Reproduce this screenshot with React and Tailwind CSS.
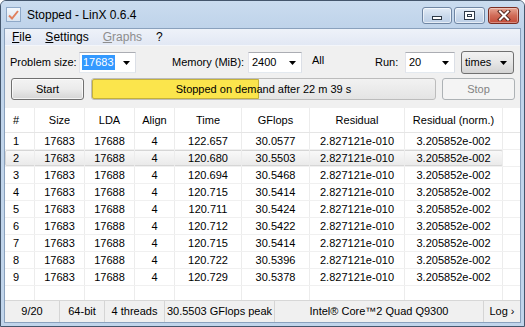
import React from "react";

const colW = ["w-[30px]", "w-[50px]", "w-[50px]", "w-[40px]", "w-[67px]", "w-[68px]", "w-[95px]", "w-[98px]"];
const headers = ["#", "Size", "LDA", "Align", "Time", "GFlops", "Residual", "Residual (norm.)"];

const runs = [
    ["1", "122.657", "30.0577"],
    ["2", "120.680", "30.5503"],
    ["3", "120.694", "30.5468"],
    ["4", "120.715", "30.5414"],
    ["5", "120.711", "30.5424"],
    ["6", "120.712", "30.5422"],
    ["7", "120.715", "30.5414"],
    ["8", "120.722", "30.5396"],
    ["9", "120.729", "30.5378"],
];

function Arrow() {
    return (
        <svg width="7" height="4" viewBox="0 0 7 4" className="shrink-0">
            <path d="M0 0h7L3.5 4z" fill="#000" />
        </svg>
    );
}

function Combo({ value, width, selected }) {
    return (
        <div className={`${width} h-[21px] bg-white border border-[#abadb3] border-b-[#e3e9ef] border-l-[#e2e3ea] border-r-[#dbdfe6] flex items-center pl-[2px] pr-[5px]`}>
            <span className={selected ? "bg-[#3399ff] text-white px-[1px] leading-[15px]" : "px-[1px]"}>{value}</span>
            <div className="flex-1" />
            <Arrow />
        </div>
    );
}

function Cell({ i, children }) {
    return (
        <div className={`${colW[i]} h-full shrink-0 border-r border-[#ececec] flex items-center ${i === 0 ? "justify-start pl-[8px]" : "justify-center"}`}>
            {children}
        </div>
    );
}

export default function App() {
    return (
        <div className="w-[525px] h-[327px] bg-[#c1d5eb] border border-[#44566c] rounded-t-[6px] flex flex-col overflow-hidden text-[11px] text-black font-['Liberation_Sans',Arial,sans-serif]">
            {/* title bar */}
            <div className="h-[27px] shrink-0 flex items-start bg-linear-to-b from-[#cadcef] to-[#bfd3ea]">
                <div className="mt-[6px] ml-[5px] w-[15px] h-[15px] border border-[#8fa9c8] bg-linear-to-b from-[#f4f8fc] to-[#d9e4f0] flex items-center justify-center">
                    <svg width="11" height="10" viewBox="0 0 11 10">
                        <path d="M1 5.5l3 3L10 1" stroke="#e0805e" strokeWidth="2" fill="none" />
                    </svg>
                </div>
                <span className="ml-[6px] mt-[6px] text-[12px] leading-[16px]">Stopped - LinX 0.6.4</span>
                <div className="flex-1" />
                <div className="mt-[6px] flex gap-[2px]">
                    <div className="w-[30px] h-[17px] rounded-[3px] border border-[#6f86a4] bg-linear-to-b from-[#e3ecf7] via-[#cbdaec] to-[#bccfe7] shadow-[inset_0_0_0_1px_rgba(255,255,255,0.6)] flex items-end justify-center pb-[3px]">
                        <div className="w-[10px] h-[4px] bg-white border border-[#2e3a48]" />
                    </div>
                    <div className="w-[31px] h-[17px] rounded-[3px] border border-[#6f86a4] bg-linear-to-b from-[#e3ecf7] via-[#cbdaec] to-[#bccfe7] shadow-[inset_0_0_0_1px_rgba(255,255,255,0.6)] flex items-center justify-center">
                        <div className="w-[11px] h-[9px] bg-white border border-[#2e3a48] flex items-center justify-center">
                            <div className="w-[5px] h-[3px] border border-[#2e3a48]" />
                        </div>
                    </div>
                    <div className="ml-[1px] w-[31px] h-[17px] rounded-[3px] border border-[#7a2d22] bg-linear-to-b from-[#e6a594] via-[#d06c58] to-[#c24a37] shadow-[inset_0_0_0_1px_rgba(255,255,255,0.35)] flex items-center justify-center">
                        <svg width="14" height="11" viewBox="0 0 14 11">
                            <path d="M3 1.5l8 8M11 1.5l-8 8" stroke="#5a2a22" strokeWidth="4" strokeLinecap="square" />
                            <path d="M3 1.5l8 8M11 1.5l-8 8" stroke="#fff" strokeWidth="2" strokeLinecap="square" />
                        </svg>
                    </div>
                </div>
                <div className="w-[5px]" />
            </div>

            {/* client area */}
            <div className="flex-1 mx-[3px] mb-[3px] border border-[#8aa1bd] bg-[#f0f0f0] flex flex-col min-h-0">
                {/* menu */}
                <div className="h-[17px] shrink-0 flex items-center gap-[14px] pl-[7px] bg-linear-to-b from-[#eef2f9] to-[#e2e8f4] border-b border-[#f4f6fa] text-[12px]">
                    <span><u>F</u>ile</span>
                    <span><u>S</u>ettings</span>
                    <span className="text-[#8d8d8d]"><u>G</u>raphs</span>
                    <span>?</span>
                </div>

                {/* parameters row */}
                <div className="mt-[6px] h-[21px] shrink-0 flex items-center pl-[5px]">
                    <span className="w-[69px]">Problem size:</span>
                    <Combo value="17683" width="w-[57px]" selected />
                    <span className="ml-[36px] w-[76px]">Memory (MiB):</span>
                    <Combo value="2400" width="w-[54px]" />
                    <span className="ml-[10px] w-[63px] -mt-[4px]">All</span>
                    <span className="w-[30px]">Run:</span>
                    <Combo value="20" width="w-[50px]" />
                    <div className="ml-[6px] w-[53px] h-[23px] rounded-[3px] border border-[#707070] bg-linear-to-b from-[#f2f2f2] via-[#e6e6e6] to-[#d3d3d3] flex items-center pl-[3px] pr-[6px]">
                        <span>times</span>
                        <div className="flex-1" />
                        <Arrow />
                    </div>
                </div>

                {/* action row */}
                <div className="mt-[5px] h-[22px] shrink-0 flex items-stretch pl-[6px] pr-[5px] gap-[7px]">
                    <div className="w-[73px] rounded-[3px] border border-[#707070] bg-linear-to-b from-[#f3f3f3] via-[#ebebeb] to-[#d5d5d5] shadow-[inset_0_0_0_1px_rgba(255,255,255,0.7)] flex items-center justify-center">
                        Start
                    </div>
                    <div className="relative flex-1 rounded-[3px] border border-[#bcbcbc] bg-linear-to-b from-[#f2f2f2] to-[#e4e4e4] flex">
                        <div className="w-[167px] h-full bg-[#fbe54c] border border-[#c4b13a] rounded-l-[2px]" />
                        <span className="absolute inset-0 flex items-center justify-center">Stopped on demand after 22 m 39 s</span>
                    </div>
                    <div className="ml-[-1px] w-[73px] rounded-[3px] border border-[#adb2b5] bg-[#f4f4f4] text-[#838383] flex items-center justify-center">
                        Stop
                    </div>
                </div>

                {/* results table */}
                <div className="mt-[8px] flex-1 min-h-0 bg-white flex flex-col">
                    <div className="h-[25px] shrink-0 flex border-b border-[#e5e5e5]">
                        {headers.map((h, i) => (
                            <Cell key={h} i={i}>{h}</Cell>
                        ))}
                        <div className="flex-1" />
                    </div>
                    {runs.map(([n, time, gf]) => (
                        <div key={n} className="h-[17px] shrink-0 flex border-b border-[#f0f0f0]">
                            <div className={`flex h-full ${n === "2" ? "bg-linear-to-b from-[#fafafa] to-[#e9e9e9] shadow-[inset_0_0_0_1px_#d6d6d6] rounded-[2px]" : ""}`}>
                                <Cell i={0}>{n}</Cell>
                                <Cell i={1}>17683</Cell>
                                <Cell i={2}>17688</Cell>
                                <Cell i={3}>4</Cell>
                                <Cell i={4}>{time}</Cell>
                                <Cell i={5}>{gf}</Cell>
                                <Cell i={6}>2.827121e-010</Cell>
                                <Cell i={7}>3.205852e-002</Cell>
                            </div>
                            <div className="flex-1" />
                        </div>
                    ))}
                    <div className="flex-1 flex">
                        {colW.map((w, i) => (
                            <Cell key={w + i} i={i} />
                        ))}
                    </div>
                </div>

                {/* status bar */}
                <div className="h-[22px] shrink-0 flex border-t border-[#d7d7d7] bg-[#f0f0f0]">
                    <div className="w-[55px] border-r border-[#d5d5d5] flex items-center justify-center">9/20</div>
                    <div className="w-[45px] border-r border-[#d5d5d5] flex items-center justify-center">64-bit</div>
                    <div className="w-[60px] border-r border-[#d5d5d5] flex items-center justify-center">4 threads</div>
                    <div className="w-[110px] border-r border-[#d5d5d5] flex items-center justify-center">30.5503 GFlops peak</div>
                    <div className="w-[209px] border-r border-[#d5d5d5] flex items-center justify-center">Intel® Core™2 Quad Q9300</div>
                    <div className="flex-1 flex items-center justify-center">Log ›</div>
                </div>
            </div>
        </div>
    );
}
